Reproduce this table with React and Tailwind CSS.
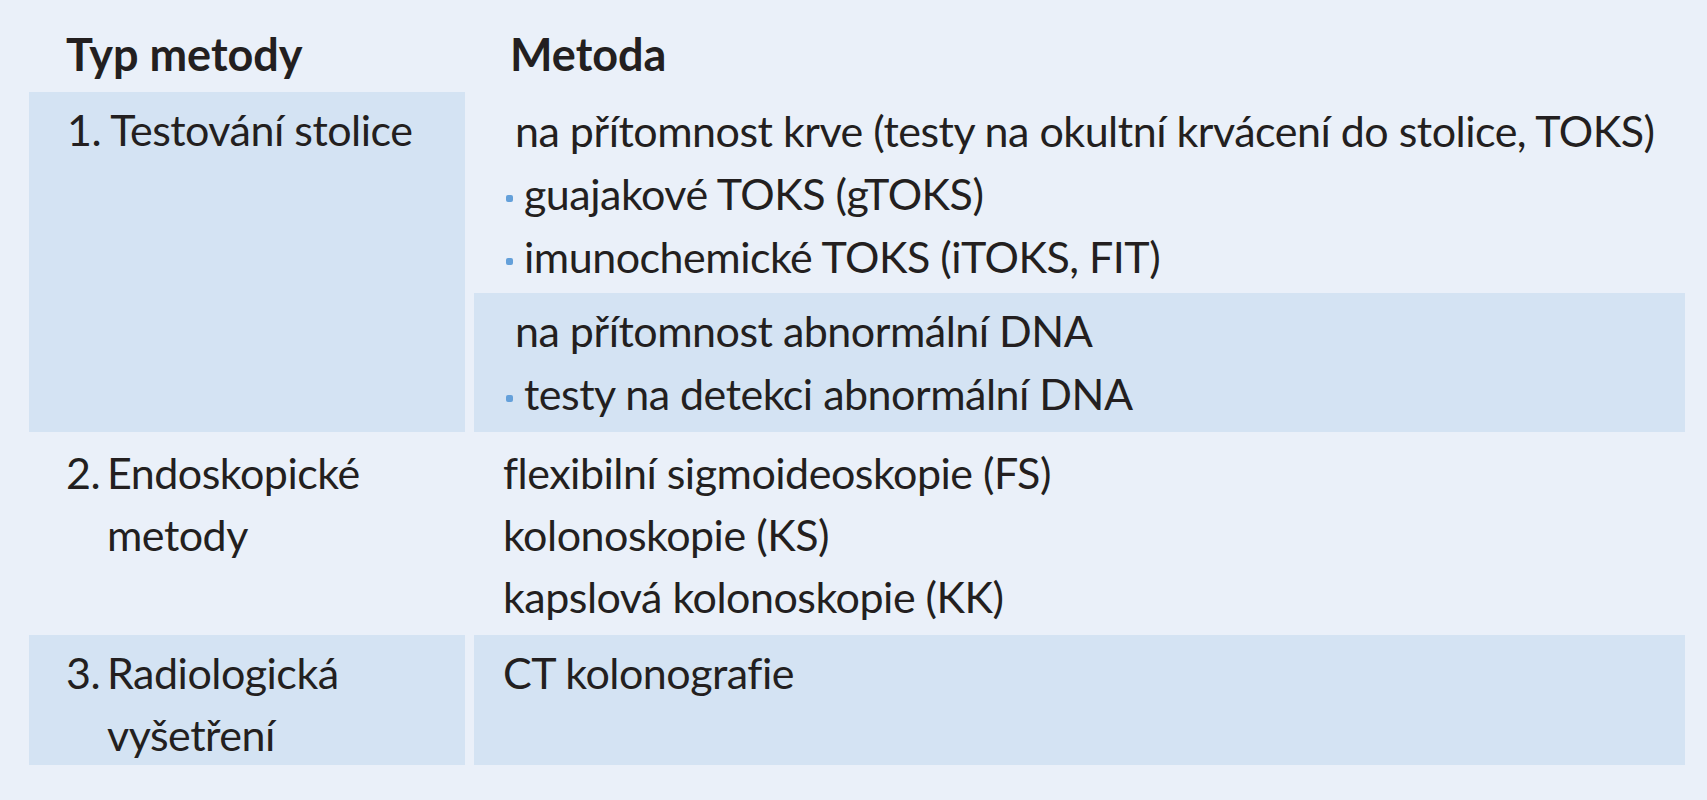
export default function App() {
  const font = "font-['Lato',sans-serif]";
  const Bullet = ({ children }) => (
    <div className="flex items-center">
      <span className="ml-[3px] mr-[11px] inline-block h-[7px] w-[7px] shrink-0 translate-y-[5px] rounded-[2px] bg-[#64a0da]" />
      <span>{children}</span>
    </div>
  );
  const Num = ({ n, lines }) => (
    <div className="flex">
      <span className="w-[41px] shrink-0">{n}</span>
      <div>
        {lines.map((l) => (
          <div key={l}>{l}</div>
        ))}
      </div>
    </div>
  );
  return (
    <div className={`${font} h-[800px] w-full bg-[#eaf0f9] text-[43px] tracking-[-0.5px] text-[#231f20]`}>
      <div className="grid grid-cols-[436px_1211px] gap-x-[9px] pl-[29px]">
        {/* header */}
        <div className="h-[92px] pl-[37px] pt-[23px] text-[45px] font-bold leading-[63px] tracking-normal">Typ metody</div>
        <div className="h-[92px] pl-[36px] pt-[23px] text-[45px] font-bold leading-[63px] tracking-normal">Metoda</div>

        {/* row 1 */}
        <div className="h-[340px] bg-[#d4e3f3] pl-[38px] pt-[7px] leading-[62px]">
          <div>1. Testování stolice</div>
        </div>
        <div className="flex h-[340px] flex-col">
          <div className="h-[201px] pl-[29px] pt-[7px] leading-[63px]">
            <div className="pl-[12px]">na přítomnost krve (testy na okultní krvácení do stolice, TOKS)</div>
            <Bullet>guajakové TOKS (gTOKS)</Bullet>
            <Bullet>imunochemické TOKS (iTOKS, FIT)</Bullet>
          </div>
          <div className="h-[139px] bg-[#d4e3f3] pl-[29px] pt-[6px] leading-[63px]">
            <div className="pl-[12px]">na přítomnost abnormální DNA</div>
            <Bullet>testy na detekci abnormální DNA</Bullet>
          </div>
        </div>

        {/* row 2 */}
        <div className="h-[203px] pl-[37px] pt-[10px] leading-[62px]">
          <Num n="2." lines={["Endoskopické", "metody"]} />
        </div>
        <div className="h-[203px] pl-[29px] pt-[10px] leading-[62px]">
          <div>flexibilní sigmoideoskopie (FS)</div>
          <div>kolonoskopie (KS)</div>
          <div>kapslová kolonoskopie (KK)</div>
        </div>

        {/* row 3 */}
        <div className="h-[130px] bg-[#d4e3f3] pl-[37px] pt-[7px] leading-[62px]">
          <Num n="3." lines={["Radiologická", "vyšetření"]} />
        </div>
        <div className="h-[130px] bg-[#d4e3f3] pl-[29px] pt-[7px] leading-[62px]">
          <div>CT kolonografie</div>
        </div>
      </div>
    </div>
  );
}
